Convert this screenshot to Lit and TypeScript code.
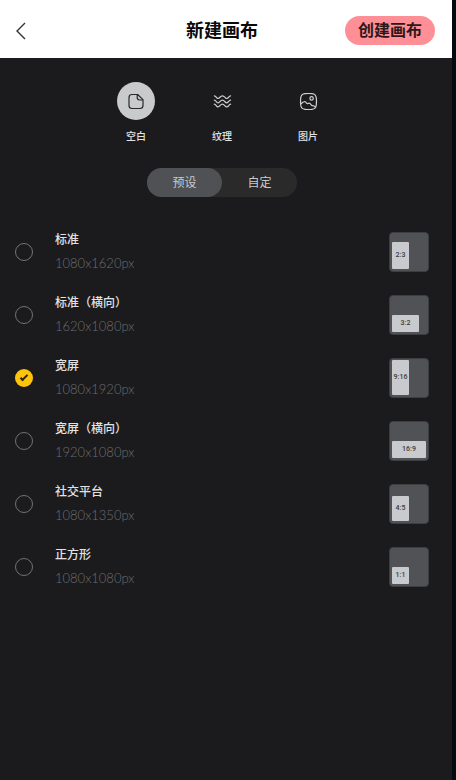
import { LitElement, html, css, svg } from "lit";
import { customElement, state } from "lit/decorators.js";
import { styleMap } from "lit/directives/style-map.js";

interface Preset {
  name: string;
  size: string;
  ratio: string;
  w: number;
  h: number;
}

const PRESETS: Preset[] = [
  { name: "标准", size: "1080x1620px", ratio: "2:3", w: 17, h: 27 },
  { name: "标准（横向）", size: "1620x1080px", ratio: "3:2", w: 27, h: 17 },
  { name: "宽屏", size: "1080x1920px", ratio: "9:16", w: 17, h: 35 },
  { name: "宽屏（横向）", size: "1920x1080px", ratio: "16:9", w: 35, h: 17 },
  { name: "社交平台", size: "1080x1350px", ratio: "4:5", w: 17, h: 25 },
  { name: "正方形", size: "1080x1080px", ratio: "1:1", w: 17, h: 17 },
];

const SOURCES = [
  {
    name: "空白",
    icon: svg`<path d="M10.6 2.5H5Q2 2.5 2 5.5V13.5Q2 16.5 5 16.5H13Q16 16.5 16 13.5V7.6ZM10.2 2.7V5.6Q10.2 8 12.6 8H15.8" />`,
  },
  {
    name: "纹理",
    icon: svg`<path d="M1.3 3.8C3.2 3.8 3.2 6.5 5 6.5S7.2 3.8 9.4 3.8 11.8 6.5 13.8 6.5 15.6 3.8 17.6 3.8M1.3 8.1C3.2 8.1 3.2 10.8 5 10.8S7.2 8.1 9.4 8.1 11.8 10.8 13.8 10.8 15.6 8.1 17.6 8.1M1.3 12.2C3.2 12.2 3.2 14.9 5 14.9S7.2 12.2 9.4 12.2 11.8 14.9 13.8 14.9 15.6 12.2 17.6 12.2" />`,
  },
  {
    name: "图片",
    icon: svg`<path d="M6 1.7Q9.5 1.3 13 1.7Q16.9 2.1 17.3 6Q17.7 9.5 17.3 13Q16.9 16.9 13 17.3Q9.5 17.7 6 17.3Q2.1 16.9 1.7 13Q1.3 9.5 1.7 6Q2.1 2.1 6 1.7Z" /><circle cx="12.6" cy="6.4" r="1.7" /><path d="M2.4 11.5C4.2 9.5 6.5 9 7.5 11C8.3 12.4 9 11.3 10 11.2C12 11 12 14 13.5 13.6C14.5 13.3 15.2 13.8 16.4 15" />`,
  },
];

@customElement("app-root")
export class AppRoot extends LitElement {
  @state() private source = 0;
  @state() private tab = 0;
  @state() private preset = 2;

  static styles = css`
    :host {
      display: block;
      min-height: 100vh;
      box-sizing: border-box;
      border-right: 4px solid #040a10;
      background: #1b1b1d;
      color: #e2e2e4;
      font-family: "Noto Sans CJK SC", sans-serif;
    }
    header {
      display: grid;
      grid-template-columns: 1fr auto 1fr;
      align-items: center;
      height: 58px;
      padding: 0 17px 0 9px;
      background: #fff;
    }
    button {
      border: 0;
      padding: 0;
      font: inherit;
      cursor: pointer;
    }
    .back {
      justify-self: start;
      display: grid;
      place-items: center;
      width: 24px;
      height: 24px;
      margin-top: 4px;
      background: none;
    }
    .back svg {
      width: 24px;
      height: 24px;
      fill: none;
      stroke: #333;
      stroke-width: 1.4;
    }
    h1 {
      margin: 0;
      font-size: 18px;
      line-height: 24px;
      font-weight: 700;
      color: #0a0a0a;
    }
    .create {
      justify-self: end;
      width: 90px;
      height: 29px;
      margin-top: 3px;
      padding-bottom: 3px;
      border-radius: 15px;
      background: #ff8f96;
      color: #2e1719;
      font-size: 16px;
      line-height: 24px;
      font-weight: 700;
    }
    main {
      padding: 24px 23px 24px 15px;
    }
    fieldset {
      border: 0;
      margin: 0;
      padding: 0;
      min-width: 0;
    }
    label {
      cursor: pointer;
    }
    .hidden {
      appearance: none;
      position: absolute;
      width: 1px;
      height: 1px;
      margin: 0;
      opacity: 0;
    }
    .sources {
      display: flex;
      justify-content: center;
      gap: 48px;
    }
    .source {
      display: flex;
      flex-direction: column;
      align-items: center;
      gap: 8px;
      width: 38px;
      font-size: 10px;
      line-height: 16px;
      font-weight: 500;
    }
    .disc {
      display: grid;
      place-items: center;
      width: 38px;
      height: 38px;
      border-radius: 50%;
    }
    .disc svg {
      width: 19px;
      height: 19px;
      fill: none;
      stroke: #cfcfd1;
      stroke-width: 1.2;
      stroke-linejoin: round;
      stroke-linecap: round;
    }
    :checked + .disc {
      background: #c9cacc;
    }
    :checked + .disc svg {
      stroke: #29292b;
      stroke-width: 1.2;
    }
    .tabs {
      display: flex;
      width: 150px;
      margin: 24px auto 23px;
      border-radius: 15px;
      background: #2a2a2b;
      font-size: 12px;
      line-height: 27px;
    }
    .tab {
      flex: 1;
    }
    .tab span {
      display: block;
      padding-bottom: 2px;
      border-radius: 15px;
      text-align: center;
      color: #c9cacc;
    }
    .tab :checked + span {
      background: #505154;
    }
    .preset {
      display: flex;
      align-items: center;
      height: 63px;
    }
    .radio {
      appearance: none;
      flex: none;
      box-sizing: border-box;
      width: 18px;
      height: 18px;
      margin: 0 22px 0 0;
      border: 1px solid #727275;
      border-radius: 50%;
      cursor: pointer;
    }
    .radio:checked {
      display: grid;
      place-items: center;
      border: 0;
      background: #fdc40a;
    }
    .radio:checked::before {
      content: "";
      width: 6px;
      height: 2px;
      margin-bottom: 2px;
      border-left: 2px solid #2c2512;
      border-bottom: 2px solid #2c2512;
      transform: rotate(-45deg);
    }
    .text {
      flex: 1;
      display: flex;
      flex-direction: column;
      gap: 6px;
      padding-bottom: 2px;
    }
    .name {
      font-size: 12px;
      line-height: 18px;
      font-weight: 500;
    }
    .size {
      font-family: Lato, sans-serif;
      font-size: 13px;
      line-height: 18px;
      font-weight: 300;
      color: #6c6c6f;
    }
    .thumb {
      flex: none;
      display: flex;
      align-items: flex-end;
      box-sizing: border-box;
      width: 40px;
      height: 40px;
      padding: 2px;
      border: 1px solid #3d3e40;
      border-radius: 4px;
      background: #515255;
    }
    .shape {
      display: grid;
      place-items: center;
      border-radius: 1px;
      background: #c9cacd;
      color: #3a3a3c;
      font-family: Roboto, sans-serif;
      font-size: 7px;
      line-height: 8px;
      font-weight: 500;
    }
  `;

  render() {
    return html`
      <header>
        <button class="back" aria-label="返回">
          <svg viewBox="0 0 24 24"><path d="M16 4 8 12 16 20" /></svg>
        </button>
        <h1>新建画布</h1>
        <button class="create">创建画布</button>
      </header>
      <main>
        <fieldset class="sources">
          ${SOURCES.map(
            (s, i) => html`<label class="source">
              <input class="hidden" type="radio" name="source" .checked=${i === this.source}
                @change=${() => (this.source = i)} />
              <span class="disc"><svg viewBox="0 0 19 19">${s.icon}</svg></span>
              <span>${s.name}</span>
            </label>`
          )}
        </fieldset>
        <fieldset class="tabs">
          ${["预设", "自定"].map(
            (t, i) => html`<label class="tab">
              <input class="hidden" type="radio" name="tab" .checked=${i === this.tab}
                @change=${() => (this.tab = i)} />
              <span>${t}</span>
            </label>`
          )}
        </fieldset>
        <fieldset>
          ${PRESETS.map(
            (p, i) => html`<label class="preset">
              <input class="radio" type="radio" name="preset" .checked=${i === this.preset}
                @change=${() => (this.preset = i)} />
              <span class="text">
                <span class="name">${p.name}</span>
                <span class="size">${p.size}</span>
              </span>
              <span class="thumb">
                <span class="shape" style=${styleMap({ width: `${p.w}px`, height: `${p.h}px` })}>${p.ratio}</span>
              </span>
            </label>`
          )}
        </fieldset>
      </main>
    `;
  }
}
